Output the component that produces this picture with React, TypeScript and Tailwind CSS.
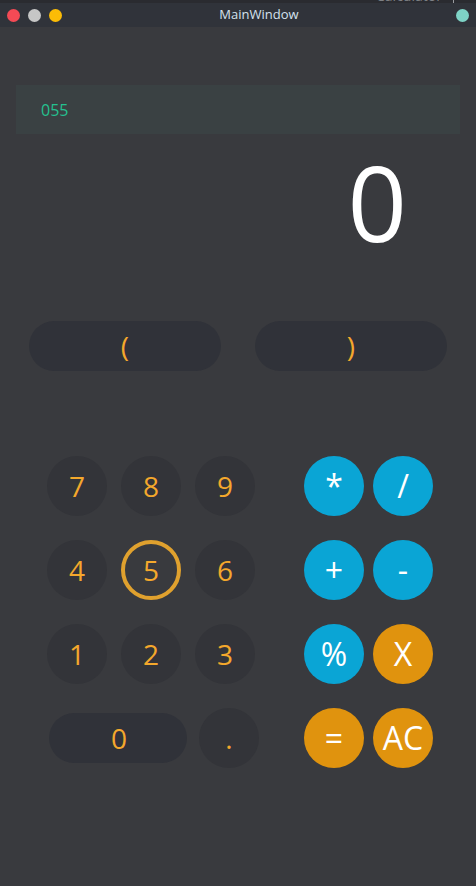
const font = "font-['Open_Sans','Noto_Sans',sans-serif]"

const digitRows = [
  ["7", "8", "9"],
  ["4", "5", "6"],
  ["1", "2", "3"],
]

const opRows = [
  [
    { label: "*", color: "bg-[#0aa5d5]" },
    { label: "/", color: "bg-[#0aa5d5]" },
  ],
  [
    { label: "+", color: "bg-[#0aa5d5]" },
    { label: "-", color: "bg-[#0aa5d5]" },
  ],
  [
    { label: "%", color: "bg-[#0aa5d5]" },
    { label: "X", color: "bg-[#e0930e]" },
  ],
  [
    { label: "=", color: "bg-[#e0930e]" },
    { label: "AC", color: "bg-[#e0930e]" },
  ],
]

function DigitKey({ label }: { label: string }) {
  const focused = label === "5"
  return (
    <div
      className={
        "flex h-[60px] w-[60px] shrink-0 items-center justify-center rounded-full text-[28px] text-[#f4a82c] " +
        (focused ? "border-[4px] border-[#e0a12e] bg-transparent" : "bg-[#333439]")
      }
    >
      {label}
    </div>
  )
}

export default function App() {
  return (
    <div className={`${font} flex h-[886px] w-[476px] flex-col overflow-hidden bg-[#393a3e]`}>
      {/* window behind */}
      <div className="flex h-[3px] overflow-hidden bg-[#2a2b30]">
        <span className="ml-[376px] -mt-[12px] text-[14px] leading-[16px] text-[#7d8084]">Calculator</span>
        <span className="ml-[11px] h-full w-px bg-[#9a9ca0]"></span>
      </div>

      {/* title bar */}
      <div className="flex h-[24px] items-center bg-[#30333a] pl-[7px] pr-[7px]">
        <div className="flex gap-[8px]">
          <span className="h-[13px] w-[13px] rounded-full bg-[#f44a55]"></span>
          <span className="h-[13px] w-[13px] rounded-full bg-[#c6c6c6]"></span>
          <span className="h-[13px] w-[13px] rounded-full bg-[#fcbc06]"></span>
        </div>
        <div className="flex-1 text-center text-[13px] text-[#d4e2ee]">MainWindow</div>
        <span className="h-[13px] w-[13px] rounded-full bg-[#7ed3c6]"></span>
      </div>

      <div className="flex flex-1 flex-col">
        {/* history */}
        <div className="mx-[16px] mt-[58px] flex h-[49px] items-center bg-[#3a4143] px-[25px] text-[16px] text-[#25c08f]">
          055
        </div>

        {/* result */}
        <div className="flex h-[187px] justify-end pr-[69px] pt-[4px] text-[104px] leading-[128px] text-white">
          0
        </div>

        {/* parens */}
        <div className="flex gap-[34px] px-[29px]">
          <div className="flex h-[50px] flex-1 items-center justify-center rounded-full bg-[#303239] text-[28px] text-[#f4a82c]">
            (
          </div>
          <div className="flex h-[50px] flex-1 items-center justify-center rounded-full bg-[#303239] text-[28px] text-[#f4a82c]">
            )
          </div>
        </div>

        {/* keypad */}
        <div className="mt-[85px] flex pl-[47px]">
          <div className="flex w-[208px] shrink-0 flex-col gap-[24px]">
            {digitRows.map((row, i) => (
              <div key={i} className="flex gap-[14px]">
                {row.map((d) => (
                  <DigitKey key={d} label={d} />
                ))}
              </div>
            ))}
            <div className="flex h-[60px] items-center gap-[12px] pl-[2px]">
              <div className="flex h-[50px] w-[138px] shrink-0 items-center justify-center rounded-full bg-[#303239] pl-[2px] text-[28px] text-[#f4a82c]">
                0
              </div>
              <div className="flex h-[60px] w-[60px] shrink-0 items-center justify-center rounded-full bg-[#333439] text-[28px] text-[#f4a82c]">
                .
              </div>
            </div>
          </div>

          <div className="ml-[49px] flex flex-col gap-[24px]">
            {opRows.map((row, i) => (
              <div key={i} className="flex gap-[9px]">
                {row.map((op) => (
                  <div
                    key={op.label}
                    className={`flex h-[60px] w-[60px] items-center justify-center rounded-full text-[32px] text-white ${op.color}`}
                  >
                    {op.label}
                  </div>
                ))}
              </div>
            ))}
          </div>
        </div>
      </div>
    </div>
  )
}
